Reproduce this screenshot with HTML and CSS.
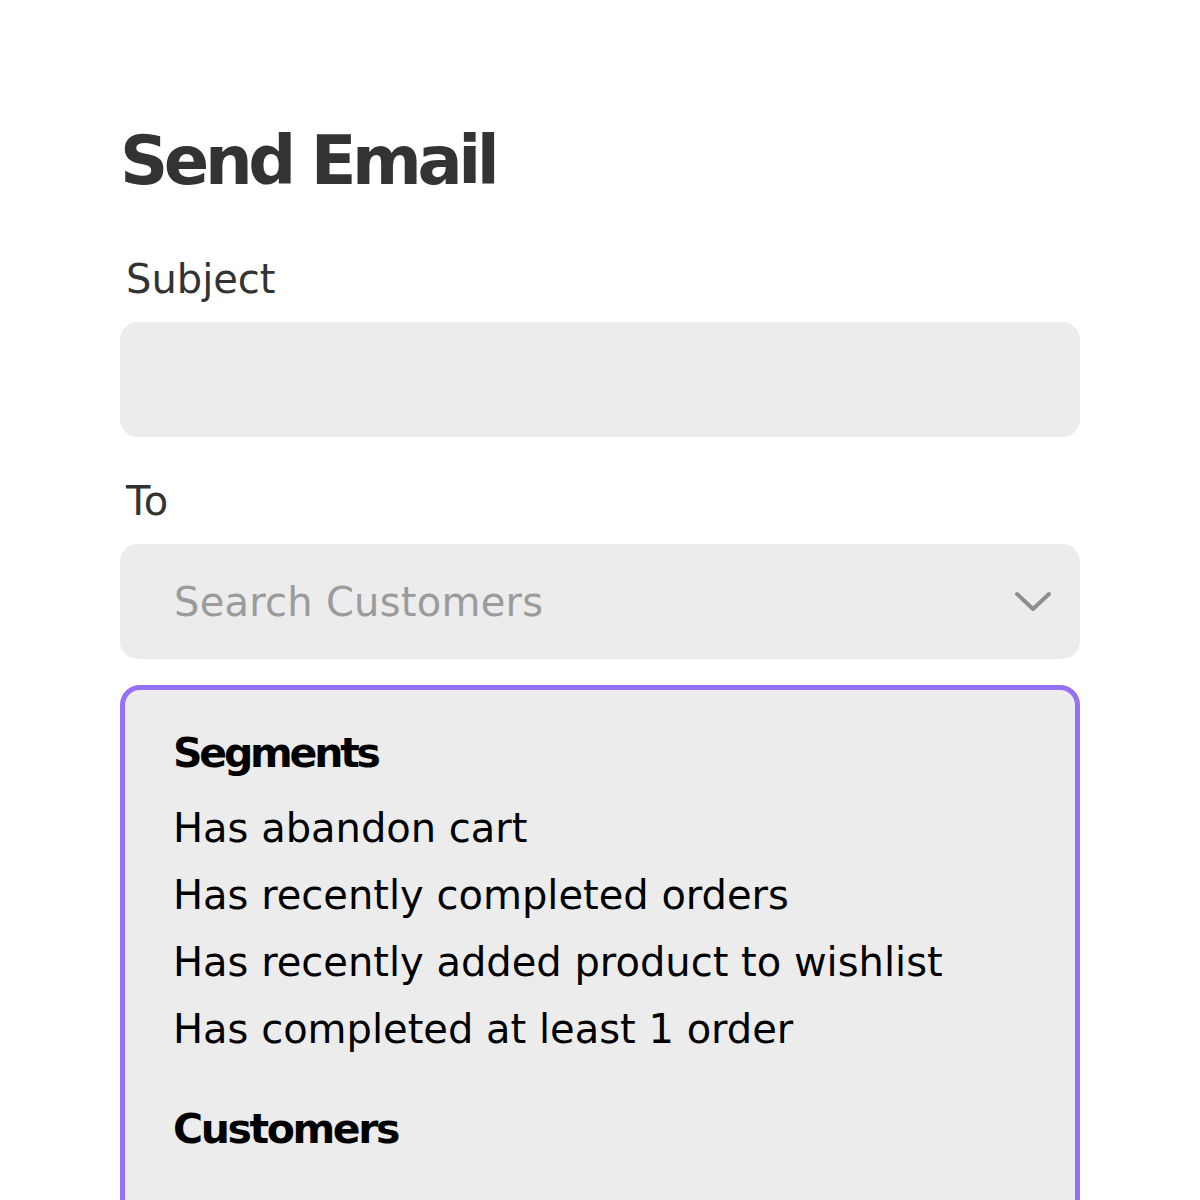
FILE: index.html
```html
<!DOCTYPE html>
<html lang="en">
<head>
<meta charset="utf-8">
<title>Send Email</title>
<link rel="stylesheet" href="styles.css">
</head>
<body>
<main class="page">
  <h1 class="title">Send Email</h1>
  <div class="field">
    <label class="label" for="subject">Subject</label>
    <input class="input" id="subject" type="text">
  </div>
  <div class="field">
    <label class="label" for="to">To</label>
    <div class="select">
      <span class="placeholder">Search Customers</span>
      <svg class="chevron" width="40" height="24" viewBox="0 0 40 24" aria-hidden="true">
        <path d="M4 4 L20 19 L36 4" fill="none" stroke="#8e8e8e" stroke-width="4" stroke-linecap="round" stroke-linejoin="round"/>
      </svg>
    </div>
  </div>
  <div class="dropdown">
    <h2 class="group-title segments">Segments</h2>
    <ul class="options">
      <li class="option">Has abandon cart</li>
      <li class="option">Has recently completed orders</li>
      <li class="option">Has recently added product to wishlist</li>
      <li class="option">Has completed at least 1 order</li>
    </ul>
    <h2 class="group-title customers">Customers</h2>
  </div>
</main>
</body>
</html>
```
FILE: styles.css
```css
* { box-sizing: border-box; }

html, body {
  margin: 0;
  padding: 0;
  background: #ffffff;
}

body {
  font-family: "DejaVu Sans", "Noto Sans", sans-serif;
  color: #333333;
}

.page {
  width: 960px;
  margin-left: 120px;
  padding-top: 121px;
  display: flex;
  flex-direction: column;
}

.title {
  margin: 0;
  font-size: 67px;
  line-height: 80px;
  font-weight: 700;
  letter-spacing: -4.4px;
  color: #333333;
}

.field {
  display: flex;
  flex-direction: column;
  margin-top: 54px;
}

.field + .field {
  margin-top: 40px;
}

.label {
  display: block;
  font-size: 40px;
  line-height: 48px;
  padding-left: 6px;
  color: #333333;
  margin-bottom: 19px;
}

.input {
  display: block;
  width: 100%;
  height: 115px;
  border: none;
  border-radius: 18px;
  background: #ececec;
  outline: none;
  font: inherit;
}

.select {
  height: 115px;
  border-radius: 18px;
  background: #ececec;
  display: flex;
  align-items: center;
  justify-content: space-between;
  padding-left: 54px;
  padding-right: 27px;
}

.placeholder {
  font-size: 40px;
  line-height: 48px;
  letter-spacing: 0.25px;
  color: #9b9b9b;
}

.chevron {
  display: block;
}

.dropdown {
  margin-top: 26px;
  border: 5px solid #9670f6;
  border-radius: 20px;
  background: #ececec;
  padding: 39px 48px 120px;
}

.group-title {
  margin: 0;
  font-size: 41px;
  line-height: 48px;
  font-weight: 700;
  color: #000000;
}

.segments {
  letter-spacing: -3.2px;
}

.options {
  list-style: none;
  margin: 18px 0 0;
  padding: 0;
}

.option {
  font-size: 40px;
  line-height: 67px;
  color: #000000;
}

.customers {
  margin-top: 42px;
  letter-spacing: -2.4px;
}
```
